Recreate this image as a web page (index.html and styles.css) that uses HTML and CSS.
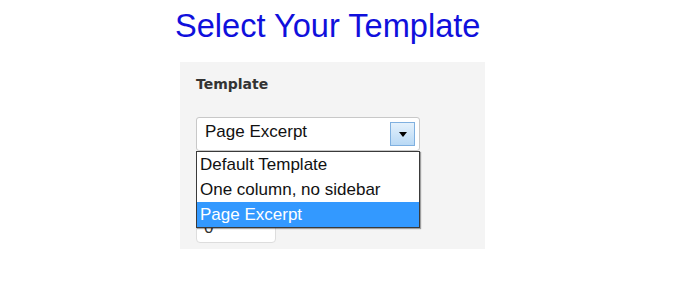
FILE: index.html
```html
<!DOCTYPE html>
<html lang="en">
<head>
  <meta charset="UTF-8">
  <title>Select Your Template</title>
  <link rel="stylesheet" href="styles.css">
</head>
<body>
  <div class="page">
    <h1 class="title">Select Your Template</h1>

    <div class="panel">
      <div class="label">Template</div>

      <div class="select">
        <span class="select-value">Page Excerpt</span>
        <span class="select-btn"><span class="arrow"></span></span>

        <ul class="options">
          <li>Default Template</li>
          <li>One column, no sidebar</li>
          <li class="active">Page Excerpt</li>
        </ul>
      </div>

      <div class="order-input">0</div>
    </div>
  </div>
</body>
</html>
```

FILE: styles.css
```css
body { margin: 0; background: #fff; font-family: "Liberation Sans", Arial, sans-serif; }
.page { margin-left: 175px; }

.title { margin: 8px 0 0; font-size: 32.6px; line-height: 36px; font-weight: normal; color: #1010dc; }

.panel { margin: 18px 0 0 5px; width: 305px; box-sizing: border-box; padding: 14px 16px 6px; background: #f4f4f4; }
.label { font-family: "DejaVu Sans", sans-serif; font-weight: bold; font-size: 14px; line-height: 17px; color: #333; }

.select { position: relative; margin-top: 24px; width: 224px; height: 34px; box-sizing: border-box; border: 1px solid #c8c8c8; border-radius: 3px; background: #fff; display: flex; align-items: center; justify-content: space-between; padding: 0 4px 0 8px; }
.select-value { font-size: 17px; line-height: 20px; color: #111; padding-bottom: 4px; }
.select-btn { width: 25px; height: 24px; box-sizing: border-box; border: 1px solid #7fb0e0; background: linear-gradient(#e4f1fc, #b9d9f5); display: flex; align-items: center; justify-content: center; }
.arrow { width: 0; height: 0; border-left: 4px solid transparent; border-right: 4px solid transparent; border-top: 5px solid #000; }

.options { position: absolute; left: -1px; top: 33px; width: 224px; box-sizing: border-box; margin: 0; padding: 0; list-style: none; background: #fff; border: 1px solid #3a3a3a; box-shadow: 1px 1px 1px rgba(0,0,0,0.35); z-index: 2; }
.options li { height: 25px; line-height: 25px; padding-left: 3px; font-size: 17px; color: #111; }
.options li.active { background: #3399ff; color: #fff; }

.order-input { margin-top: 62px; width: 80px; height: 30px; box-sizing: border-box; border: 1px solid #ddd; border-radius: 4px; background: #fff; padding: 4px 0 0 7px; font-size: 17px; line-height: 20px; color: #333; }
```
